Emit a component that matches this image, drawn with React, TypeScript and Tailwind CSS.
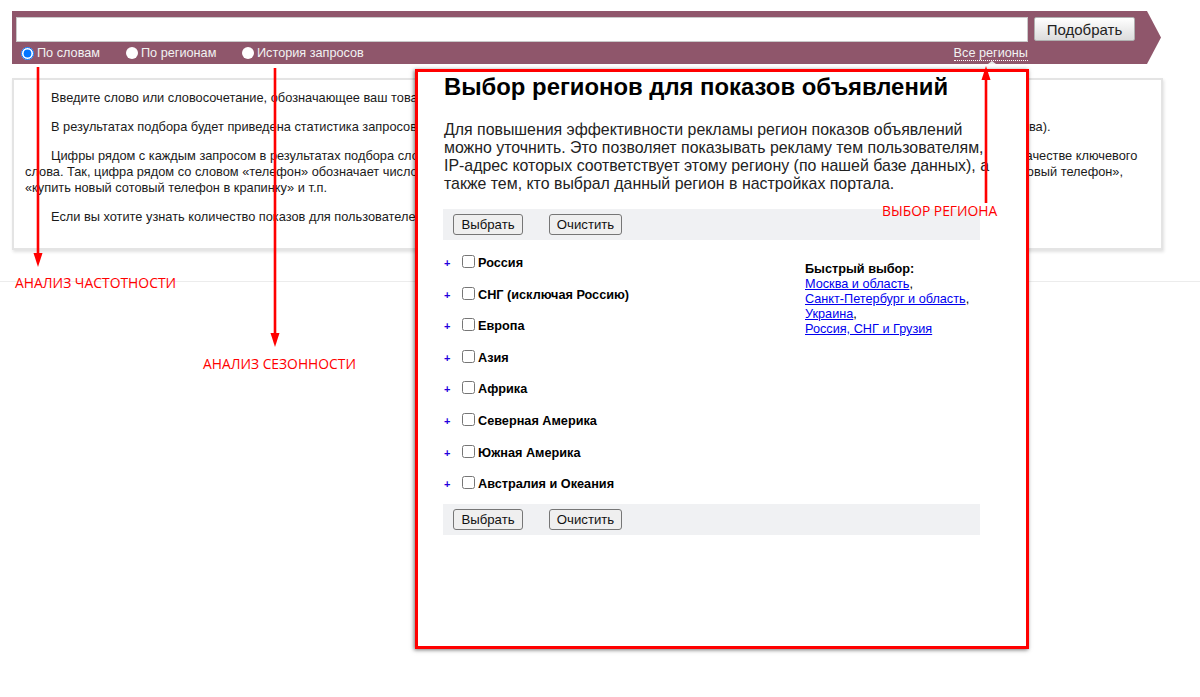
import React from "react";

const Arrow = ({ className, h, up }: { className: string; h: number; up?: boolean }) => (
  <svg className={className} width="14" height={h} viewBox={`0 0 14 ${h}`}>
    {up ? (
      <>
        <rect x="5.7" y="10" width="2.6" height={h - 10} fill="#ff0000" />
        <path d="M7 0 L11.5 14 L2.5 14 Z" fill="#ff0000" />
      </>
    ) : (
      <>
        <rect x="5.7" y="0" width="2.6" height={h - 10} fill="#ff0000" />
        <path d={`M7 ${h} L11.5 ${h - 14} L2.5 ${h - 14} Z`} fill="#ff0000" />
      </>
    )}
  </svg>
);

const regions = [
  "Россия",
  "СНГ (исключая Россию)",
  "Европа",
  "Азия",
  "Африка",
  "Северная Америка",
  "Южная Америка",
  "Австралия и Океания",
];

const ActionBar = () => (
  <div className="flex h-[31px] w-[537px] items-center gap-[26px] bg-[#f0f1f3] pl-[10px]">
    <button className="h-[21px] w-[70px] rounded-[3px] border border-[#767676] bg-[#efefef] text-[13.2px] text-[#111]">Выбрать</button>
    <button className="h-[21px] w-[73px] rounded-[3px] border border-[#767676] bg-[#efefef] text-[13.2px] text-[#111]">Очистить</button>
  </div>
);

export default function App() {
  return (
    <div className="relative h-[697px] w-[1200px] overflow-hidden bg-white font-['Liberation_Sans',Arial,sans-serif] text-black">
      <div className="pt-[11px] pl-[12px]">
        <div className="relative flex h-[53px] w-[1149px]">
          <div className="flex h-full w-[1135px] flex-col bg-[#8f566b] pt-[6px] pl-[4px]">
            <div className="flex h-[25px] items-start">
              <input className="h-[25px] w-[1012px] border border-[#c9c9c9] bg-white" />
              <button className="ml-[6px] h-[24px] w-[101px] rounded-[2px] border border-[#b0b0b0] bg-gradient-to-b from-[#ffffff] to-[#dcdcdc] pt-px text-[15px] text-[#222]">Подобрать</button>
            </div>
            <div className="flex w-[1012px] items-center pt-[2px] text-[12.7px] text-[#f2f2f2]">
              <label className="flex w-[105px] items-center pl-[5px]">
                <input type="radio" name="m" defaultChecked className="m-0 h-[13px] w-[13px]" />
                <span className="ml-[3px]">По словам</span>
              </label>
              <label className="flex w-[121px] items-center pl-[5px]">
                <span className="-mt-px h-[12px] w-[12px] rounded-full bg-white"></span>
                <span className="ml-[3px]">По регионам</span>
              </label>
              <label className="flex items-center">
                <span className="-mt-px h-[12px] w-[12px] rounded-full bg-white"></span>
                <span className="ml-[3px]">История запросов</span>
              </label>
              <span className="ml-auto border-b border-dotted border-white leading-[13px]">Все регионы</span>
            </div>
          </div>
          <svg width="14" height="53" viewBox="0 0 14 53" className="block">
            <path d="M0 0 L14 26.5 L0 53 Z" fill="#8f566b" />
          </svg>
          <span className="absolute left-[976px] top-[50px] h-0 w-0 border-x-[4px] border-b-[3px] border-x-transparent border-b-[#e8e8e8]"></span>
        </div>

        <div className="mt-[14px] h-[172px] w-[1151px] border-2 border-[#e4e4e4] px-[11px] pt-[10px] text-[12.8px] leading-[16px] text-[#1a1a1a] shadow-[1px_2px_3px_rgba(0,0,0,0.12)]">
          <p className="indent-[26px]">Введите слово или словосочетание, обозначающее ваш товар или услугу.</p>
          <p className="mt-[13px] indent-[26px]">В результатах подбора будет приведена статистика запросов, включающих указанное вами слово или словосочетание, за последний месяц (и похожие на него слова).</p>
          <p className="mt-[13px] indent-[26px]">Цифры рядом с каждым запросом в результатах подбора слов дают предварительный прогноз числа показов в месяц, которое вы получите, выбрав тот запрос в качестве ключевого слова. Так, цифра рядом со словом «телефон» обозначает число показов по всем близким запросам со словом «телефон»: «купить телефон», «сотовый телефон», «новый телефон», «купить новый сотовый телефон в крапинку» и т.п.</p>
          <p className="mt-[13px] indent-[26px]">Если вы хотите узнать количество показов для пользователей конкретного региона, выберите его.</p>
        </div>
        <div className="-ml-[12px] mt-[31px] h-px w-[1200px] bg-[#ececec]"></div>
      </div>

      {/* Overlay: dialog */}
      <div className="absolute left-[415px] top-[69px] h-[580px] w-[614px] border-[3px] border-[#ff0000] bg-white pl-[25px] shadow-[-1px_1px_4px_rgba(0,0,0,0.55)]">
        <h1 className="mt-[1px] pl-px text-[23.85px] font-bold leading-[28px]">Выбор регионов для показов объявлений</h1>
        <p className="mt-[20px] w-[560px] pl-px text-[15.9px] leading-[18px] text-[#222]">
          Для повышения эффективности рекламы регион показов объявлений<br />
          можно уточнить. Это позволяет показывать рекламу тем пользователям,<br />
          IP-адрес которых соответствует этому региону (по нашей базе данных), а<br />
          также тем, кто выбрал данный регион в настройках портала.
        </p>
        <div className="mt-[16px]"><ActionBar /></div>
        <div className="flex h-[264px] w-[537px]">
          <ul className="w-[362px] pt-[14px]">
            {regions.map((r) => (
              <li key={r} className="flex h-[31.6px] items-start">
                <span className="w-[19px] pl-[1px] text-[11px] font-bold leading-[18px] text-[#2200dd]">+</span>
                <input type="checkbox" className="m-0 mt-[1px] h-[13px] w-[13px]" />
                <span className="ml-[3px] text-[12.7px] font-bold leading-[18px]">{r}</span>
              </li>
            ))}
          </ul>
          <div className="pt-[22px] text-[12.7px] leading-[15px]">
            <div className="font-bold">Быстрый выбор:</div>
            <div><a className="text-[#0000ee] underline">Москва и область</a>,</div>
            <div><a className="text-[#0000ee] underline">Санкт-Петербург и область</a>,</div>
            <div><a className="text-[#0000ee] underline">Украина</a>,</div>
            <div><a className="text-[#0000ee] underline">Россия, СНГ и Грузия</a></div>
          </div>
        </div>
        <ActionBar />
      </div>

      {/* Overlay: annotations */}
      <Arrow className="absolute left-[31px] top-[67px]" h={200} />
      <Arrow className="absolute left-[268px] top-[68px]" h={279} />
      <Arrow up className="absolute left-[979px] top-[66px]" h={137} />
      <span className="absolute left-[15px] top-[273px] font-['Open_Sans',sans-serif] text-[13.9px] leading-[20px] text-[#ff0000]">АНАЛИЗ ЧАСТОТНОСТИ</span>
      <span className="absolute left-[203px] top-[354px] font-['Open_Sans',sans-serif] text-[13.85px] leading-[20px] text-[#ff0000]">АНАЛИЗ СЕЗОННОСТИ</span>
      <span className="absolute left-[882px] top-[201px] font-['Open_Sans',sans-serif] text-[13.85px] leading-[20px] text-[#ff0000]">ВЫБОР РЕГИОНА</span>
    </div>
  );
}
